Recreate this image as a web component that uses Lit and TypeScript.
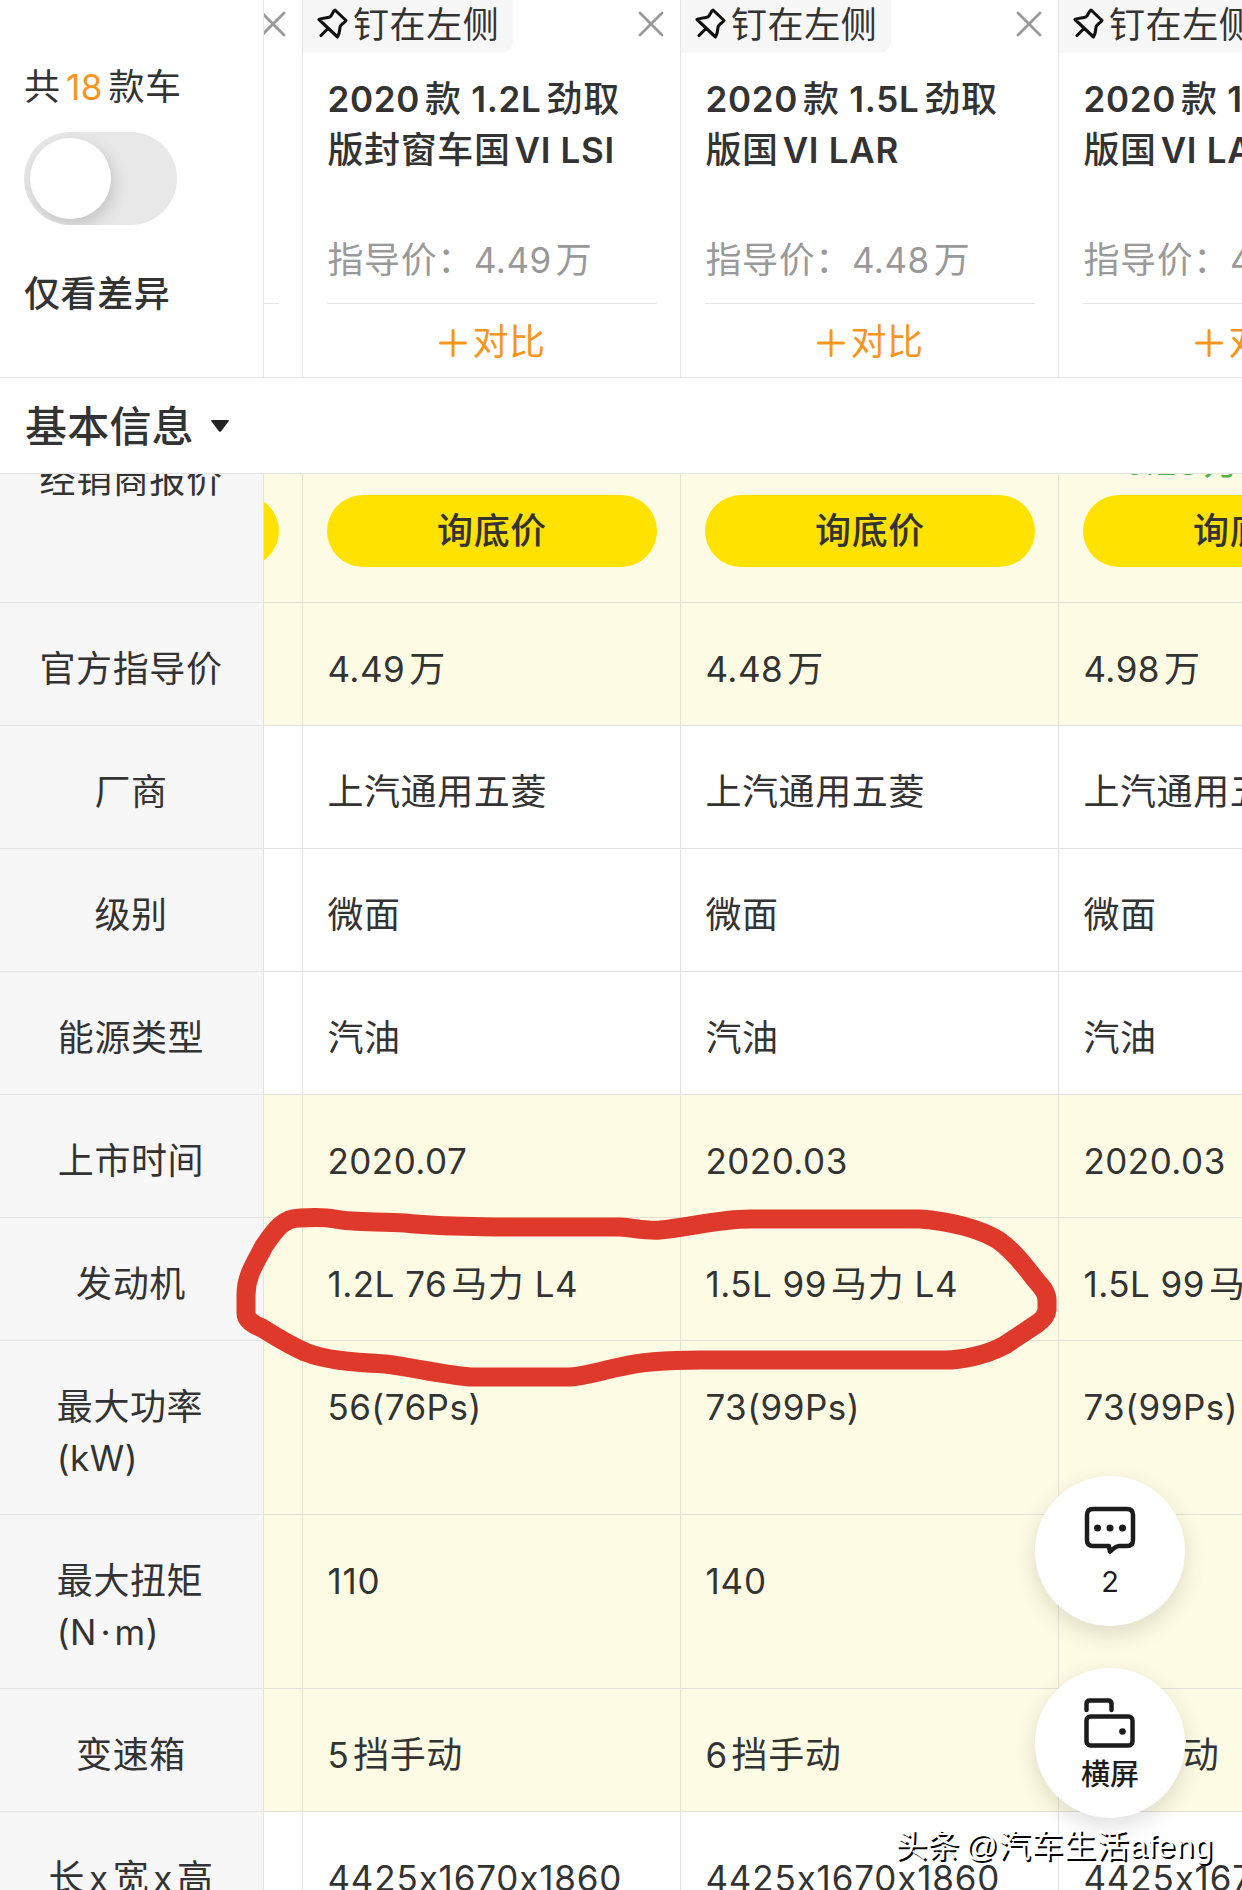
import { LitElement, html, css, svg } from "lit";
import { customElement } from "lit/decorators.js";

interface Car { title: string; price: string; }
interface Spec { label: string; values: string[]; diff: boolean; tall?: boolean; wide?: boolean; }

const CARS: Car[] = [
  { title: "2020款 1.2L劲取|版封窗车国VI LSI", price: "4.49万" },
  { title: "2020款 1.5L劲取|版国VI LAR", price: "4.48万" },
  { title: "2020款 1.5L劲取|版国VI LAR", price: "4.98万" },
];

const SPECS: Spec[] = [
  { label: "官方指导价", values: ["4.49万", "4.48万", "4.98万"], diff: true },
  { label: "厂商", values: ["上汽通用五菱", "上汽通用五菱", "上汽通用五菱"], diff: false },
  { label: "级别", values: ["微面", "微面", "微面"], diff: false },
  { label: "能源类型", values: ["汽油", "汽油", "汽油"], diff: false },
  { label: "上市时间", values: ["2020.07", "2020.03", "2020.03"], diff: true },
  { label: "发动机", values: ["1.2L 76马力 L4", "1.5L 99马力 L4", "1.5L 99马力 L4"], diff: true },
  { label: "最大功率|(kW)", values: ["56(76Ps)", "73(99Ps)", "73(99Ps)"], diff: true, tall: true },
  { label: "最大扭矩|(N·m)", values: ["110", "140", "140"], diff: true, tall: true, wide: true },
  { label: "变速箱", values: ["5挡手动", "6挡手动", "6挡手动"], diff: true },
  { label: "长x宽x高", values: ["4425x1670x1860", "4425x1670x1860", "4425x1670x1860"], diff: false, wide: true },
];

// Splits mixed text so that Latin runs get a small gap next to Chinese ones.
const mixed = (text: string) => {
  const runs = text.match(/[\x20-\x7e]+|·|[^\x20-\x7e·]+/g) ?? [];
  return runs.map((run, i) => {
    if (run === "·") return html`<span class="lat mid">·</span>`;
    const latin = /^[\x20-\x7e]/.test(run);
    if (!latin) return html`<span>${run}</span>`;
    const before = i > 0 && !run.startsWith(" ") && runs[i - 1] !== "·" ? "gb" : "";
    const after = i < runs.length - 1 && !run.endsWith(" ") && runs[i + 1] !== "·" ? "ga" : "";
    return html`<span class="lat ${before} ${after}">${run}</span>`;
  });
};
const lines = (text: string) => text.split("|").map((l) => html`<div class="line">${mixed(l)}</div>`);

const closeIcon = svg`<svg class="close" viewBox="0 0 26 26"><path d="M2 2L24 24M24 2L2 24" /></svg>`;
const pinIcon = svg`<svg class="pin" viewBox="0 0 32 32"><path d="M18 2L29 12.500C27 15.500 24 16 23.200 18.500C22.500 21 23 25 20.500 29L2 11.500C6 9.500 10 10.500 13 8.800C15.500 7.200 15.500 3.500 18 2ZM11 20.500L4 27.500" /></svg>`;

@customElement("app-root")
export class AppRoot extends LitElement {
  static styles = css`
    :host { display: block; }
    .page {
      position: relative; width: 1242px; height: 1890px; overflow: hidden; background: #fff; color: #333;
      font: 36px/51px Inter, "Noto Sans CJK SC", sans-serif; letter-spacing: 0.6px; white-space: nowrap;
      display: flex; flex-direction: column;
    }
    .lat { font-size: 35px; letter-spacing: 0.5px; white-space: pre; }
    .wide .cell .lat { letter-spacing: 0.85px; }
    .mid { margin: 0 3.5px; }
    .gb { margin-left: 4px; }
    .ga { margin-right: 4px; }
    .line { height: 51px; }
    .med { font-weight: 500; }
    .head { display: flex; height: 377px; border-bottom: 1px solid #e5e5e5; flex: none; }
    .summary { box-sizing: border-box; width: 264px; flex: none; border-right: 1px solid #e5e5e5; padding: 62px 0 0 24px; }
    .num { color: #f7951e; margin: 0 5.5px; }
    .switch { margin-top: 19px; width: 153px; height: 93px; box-sizing: border-box; border-radius: 47px; background: #e8e8e9; padding: 6px; overflow: hidden; }
    .knob { width: 81px; height: 81px; border-radius: 50%; background: #fff; box-shadow: 3px 6px 16px rgba(0,0,0,.16); }
    .only { margin-top: 44px; }
    .cols { display: flex; flex: 1; overflow: hidden; }
    .sliver { box-sizing: border-box; width: 38px; flex: none; overflow: hidden; }
    .head .sliver { display: flex; flex-direction: column; }
    .sliver .close { margin: 11px 0 0 -4px; }
    .sliver .rule { width: 15px; margin: 266px 0 0; }
    .car { box-sizing: border-box; width: 378px; flex: none; border-left: 1px solid #e5e5e5; display: flex; flex-direction: column; }
    .top { display: flex; justify-content: space-between; height: 53px; }
    .tag { display: flex; align-items: center; box-sizing: border-box; width: 210px; height: 53px; padding: 0 0 2px 14px; background: #f7f7f7; border-radius: 0 0 12px 0; }
    .pin { width: 32px; height: 32px; margin: 0 4px 3px 0; fill: none; stroke: #111; stroke-width: 3.1; stroke-linejoin: round; stroke-linecap: round; }
    .close { width: 26px; height: 26px; margin: 11px 16px 0 0; flex: none; fill: none; stroke: #999; stroke-width: 2.8; stroke-linecap: round; }
    .title { margin: 21px 0 0 24.5px; height: 102px; }
    .title span { font-weight: 500; }
    .title .lat { font-weight: 600; letter-spacing: .7px; }
    .title .ga { margin-right: 5px; }
    .price { margin: 59px 0 0 24.5px; color: #999; }
    .rule { height: 1px; width: 330px; margin: 17px 0 0 24px; background: #e5e5e5; flex: none; }
    .add { display: flex; align-items: center; justify-content: center; height: 73px; color: #f7951e; padding: 4px 0 0 2px; box-sizing: border-box; width: 377px; }
    .plus { width: 28px; height: 28px; margin-right: 5px; stroke: #f7951e; stroke-width: 3; stroke-linecap: round; }
    .section { display: flex; align-items: center; border-bottom: 1px solid #e5e5e5; padding: 2px 0 0 25px; box-sizing: border-box; height: 96px; flex: none; font-size: 42px; letter-spacing: .2px; }
    .tri { width: 20px; height: 14px; margin: 0 0 1px 16px; fill: #222; }
    .table { flex: 1; overflow: hidden; display: flex; flex-direction: column; }
    .row { display: flex; height: 123px; flex: none; }
    .row.tall { height: 174px; }
    .row.quote { margin-top: -60px; height: 189px; }
    .label { box-sizing: border-box; width: 264px; flex: none; background: #f7f7f7; border-right: 1px solid #e2e2e2; border-bottom: 1px solid #e2e2e2; padding: 41px 1px 0 0; display: flex; justify-content: center; }
    .tall .label { padding-right: 3px; }
    .row .sliver { border-bottom: 1px solid #e2e2e2; }
    .cell { box-sizing: border-box; width: 378px; flex: none; border-left: 1px solid #e2e2e2; border-bottom: 1px solid #e2e2e2; padding: 41px 0 0 24.4px; }
    .diff .cell, .diff .sliver { background: #fefbe4; border-color: #e3e1d3; }
    .quote .cell { padding: 19px 0 0 24px; }
    .dealer { height: 51px; line-height: 59px; margin: 0 0 11px; padding-left: 41px; color: #4cb748; }
    .ask { width: 330px; height: 72px; line-height: 72px; border-radius: 36px; background: #ffe200; text-align: center; flex: none; }
    .quote .sliver { display: flex; align-items: flex-start; justify-content: flex-end; padding: 81px 23px 0 0; }
    .mark { position: absolute; left: 0; top: 0; width: 1242px; height: 1890px; fill: none; stroke: #df392b; stroke-width: 19; stroke-linejoin: round; }
    .fabs { position: absolute; left: 1035px; top: 1476px; display: flex; flex-direction: column; gap: 42px; }
    .fab { width: 150px; height: 150px; border-radius: 50%; background: #fff; box-shadow: 0 8px 22px rgba(0,0,0,.13); display: flex; flex-direction: column; align-items: center; box-sizing: border-box; color: #1c1c1c; letter-spacing: 0; }
    .fab svg { width: 54px; height: 54px; margin-top: 28px; fill: none; stroke: #1c1c1c; stroke-width: 4.5; stroke-linejoin: round; stroke-linecap: round; flex: none; }
    .fab .dot { fill: #1c1c1c; stroke: none; }
    .cnt { font-size: 29px; line-height: 36px; margin-top: 6px; }
    .land { font-size: 29px; line-height: 36px; margin-top: 7px; font-weight: 500; }
    .wm { position: absolute; left: 895px; top: 1822px; font: 32px/48px "Liberation Sans", "Noto Sans CJK SC", sans-serif; letter-spacing: 0; word-spacing: -3px; color: #fff; text-shadow: 2px 2px 0 #000; }
    .wm .user { letter-spacing: .75px; }
  `;

  render() {
    return html`<div class="page">
      <div class="head">
        <div class="summary">
          <div class="line"><span>共</span><span class="lat num">18</span><span>款车</span></div>
          <div class="switch"><div class="knob"></div></div>
          <div class="line only med">仅看差异</div>
        </div>
        <div class="cols">
          <div class="sliver">${closeIcon}<div class="rule"></div></div>
          ${CARS.map((c) => html`<div class="car">
            <div class="top"><div class="tag">${pinIcon}<span>钉在左侧</span></div>${closeIcon}</div>
            <div class="title">${lines(c.title)}</div>
            <div class="price"><span>指导价：</span><span class="lat ga">${c.price.slice(0, -1)}</span><span>万</span></div>
            <div class="rule"></div>
            <div class="add"><svg class="plus" viewBox="0 0 28 28"><path d="M14 1.500V26.500M1.500 14H26.500" /></svg><span>对比</span></div>
          </div>`)}
        </div>
      </div>
      <div class="section"><span class="med">基本信息</span><svg class="tri" viewBox="0 0 20 14"><path d="M2 1H18Q19.500 1 18.600 2.300L11.200 12.200Q10 13.500 8.800 12.200L1.400 2.300Q.5 1 2 1Z" /></svg></div>
      <div class="table">
        <div class="row quote diff">
          <div class="label">经销商报价</div>
          <div class="cols"><div class="sliver"><div class="ask"></div></div>
          ${["", "", "5.28万"].map((d) => html`<div class="cell"><div class="dealer">${mixed(d)}</div><div class="ask med">询底价</div></div>`)}</div>
        </div>
        ${SPECS.map((s) => html`<div class="row ${s.diff ? "diff" : ""} ${s.tall ? "tall" : ""} ${s.wide ? "wide" : ""}">
          <div class="label"><div>${lines(s.label)}</div></div>
          <div class="cols"><div class="sliver"></div>${s.values.map((v) => html`<div class="cell">${lines(v)}</div>`)}</div>
        </div>`)}
      </div>
      <svg class="mark" viewBox="0 0 1242 1890"><path d="M300 1218C315 1217 325 1217 335 1219C355 1223 380 1221 405 1223C440 1227 470 1226 500 1227L620 1227C635 1228 645 1231 660 1230C690 1227 720 1219 750 1219L920 1219C950 1221 980 1229 998 1240C1018 1254 1030 1274 1040 1285Q1047 1293 1047 1300V1310Q1046 1317 1038 1323L1005 1345C985 1356 960 1360 945 1360L700 1360C670 1360 640 1362 620 1367C600 1371 585 1376 570 1377L470 1377C440 1374 410 1367 385 1364C350 1362 325 1360 305 1352C285 1343 270 1333 262 1328Q246 1322 246 1313V1295C246 1275 256 1262 264 1246C275 1230 283 1218 300 1218Z" /></svg>
      <div class="fabs">
        <div class="fab"><svg viewBox="0 0 54 54"><path d="M10 5H44Q50 5 50 11V36Q50 42 44 42H36Q33 42 27 47.500Q26 45 26 42H10Q4 42 4 36V11Q4 5 10 5Z" /><circle class="dot" cx="14.500" cy="24" r="3.500" /><circle class="dot" cx="27" cy="24" r="3.500" /><circle class="dot" cx="39.500" cy="24" r="3.500" /></svg><span class="cnt">2</span></div>
        <div class="fab"><svg viewBox="0 0 54 54"><path d="M3.500 14V8Q3.500 4.500 7 4.500H25Q28.500 4.500 28.500 8V14" /><rect x="3.500" y="20.500" width="46" height="29" rx="4" /><circle class="dot" cx="39.500" cy="35.500" r="3.300" /></svg><span class="land">横屏</span></div>
      </div>
      <div class="wm">头条 <span class="user">@汽车生活afeng</span></div>
    </div>`;
  }
}
